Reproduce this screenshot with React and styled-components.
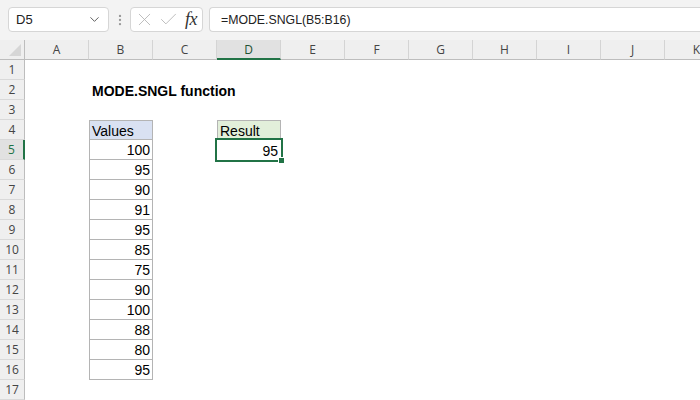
import React from "react";
import styled, { createGlobalStyle, css } from "styled-components";
import { ChevronDown, X, Check, EllipsisVertical } from "lucide-react";

const Global = createGlobalStyle`
  html, body { margin: 0; padding: 0; background: #fff; }
  body { width: 700px; height: 400px; overflow: hidden; font-family: "Liberation Sans", Arial, sans-serif; }
`;

const Page = styled.div`
  width: 700px;
  height: 400px;
  overflow: hidden;
  display: flex;
  flex-direction: column;
`;

const Toolbar = styled.div`
  height: 40px;
  flex: none;
  box-sizing: border-box;
  background: #f3f3f3;
  display: flex;
  align-items: flex-start;
  padding: 7px 0 0 8px;
`;

const NameBox = styled.div`
  width: 101px;
  height: 25px;
  box-sizing: border-box;
  background: #fff;
  border: 1px solid #d6d6d6;
  border-radius: 4px;
  display: flex;
  align-items: center;
  justify-content: space-between;
  padding: 0 6px 0 7px;
  font-size: 13px;
  color: #222;
`;

const Dots = styled.div`
  width: 21px;
  height: 25px;
  display: flex;
  align-items: center;
  justify-content: center;
  color: #9a9a9a;
`;

const FxBox = styled.div`
  width: 73px;
  height: 25px;
  box-sizing: border-box;
  background: #fff;
  border: 1px solid #d6d6d6;
  border-radius: 4px;
  display: flex;
  align-items: center;
  padding: 0 0 0 3px;
  gap: 3px;
  color: #b5b5b5;
  margin-right: 6px;
`;

const Fx = styled.span`
  font-family: "Liberation Serif", "Times New Roman", serif;
  font-style: italic;
  font-size: 18px;
  color: #333;
  margin-left: 3px;
  letter-spacing: -0.5px;
`;

const FormulaBar = styled.div`
  flex: 1;
  height: 25px;
  box-sizing: border-box;
  background: #fff;
  border: 1px solid #d6d6d6;
  border-right: none;
  border-radius: 4px 0 0 4px;
  display: flex;
  align-items: center;
  padding-left: 11px;
  font-size: 12.3px;
  color: #222;
`;

const Sheet = styled.div`
  display: grid;
  grid-template-columns: 25px repeat(11, 64px);
  grid-template-rows: 20px;
  grid-auto-rows: 20px;
  flex: 1;
  overflow: hidden;
`;

const ColHead = styled.div`
  box-sizing: border-box;
  background: ${(p) => (p.$active ? "#e1e1e1" : "#efefef")};
  border-right: 1px solid #d4d4d4;
  border-bottom: ${(p) => (p.$active ? "2px solid #217346" : "1px solid #bdbdbd")};
  display: flex;
  align-items: center;
  justify-content: center;
  font-family: "Open Sans", "Liberation Sans", sans-serif;
  font-size: 12px;
  color: ${(p) => (p.$active ? "#1f5133" : "#444")};
  padding-top: ${(p) => (p.$active ? "1px" : "0")};
`;

const Corner = styled.div`
  box-sizing: border-box;
  background: #efefef;
  border-right: 1px solid #bdbdbd;
  border-bottom: 1px solid #bdbdbd;
  position: relative;
  &::after {
    content: "";
    position: absolute;
    right: 3px;
    bottom: 3px;
    width: 0;
    height: 0;
    border-left: 12px solid transparent;
    border-bottom: 12px solid #d6d6d6;
  }
`;

const RowHead = styled.div`
  box-sizing: border-box;
  background: ${(p) => (p.$active ? "#e1e1e1" : "#efefef")};
  border-right: ${(p) => (p.$active ? "2px solid #217346" : "1px solid #bdbdbd")};
  border-bottom: 1px solid #d9d9d9;
  display: flex;
  align-items: center;
  justify-content: center;
  font-family: "Open Sans", "Liberation Sans", sans-serif;
  font-size: 12px;
  color: ${(p) => (p.$active ? "#217346" : "#444")};
`;

const Cell = styled.div`
  box-sizing: border-box;
  position: relative;
  font-size: 14px;
  color: #000;
  line-height: 20px;
  padding: 1px 3px 0 3px;
  white-space: nowrap;
  text-align: ${(p) => p.$align || "left"};
  font-weight: ${(p) => (p.$bold ? 700 : 400)};
  background: ${(p) => p.$fill || "transparent"};
  overflow: visible;
  ${(p) =>
    p.$boxed &&
    css`
      border-left: 1px solid #b4b4b4;
      border-right: 1px solid #b4b4b4;
      border-bottom: 1px solid #b4b4b4;
      line-height: 19px;
      padding-right: 2px;
      padding-left: 2px;
    `}
  ${(p) =>
    p.$top &&
    css`
      border-top: 1px solid #b4b4b4;
      line-height: 18px;
    `}
  ${(p) =>
    p.$selected &&
    css`
      &::before {
        content: "";
        position: absolute;
        left: -2px;
        top: -2px;
        right: -2px;
        bottom: -2px;
        border: 2px solid #217346;
        pointer-events: none;
      }
      &::after {
        content: "";
        position: absolute;
        right: -4px;
        bottom: -4px;
        background: #217346;
        border: 1px solid #fff;
        box-sizing: border-box;
        width: 7px;
        height: 7px;
      }
    `}
`;

const cols = ["A", "B", "C", "D", "E", "F", "G", "H", "I", "J", "K"];
const values = [100, 95, 90, 91, 95, 85, 75, 90, 100, 88, 80, 95];

function cellProps(row, col) {
  if (row === 2 && col === "B") return { text: "MODE.SNGL function", $bold: true };
  if (row === 4 && col === "B")
    return { text: "Values", $boxed: true, $top: true, $fill: "#d9e1f2" };
  if (row >= 5 && row <= 16 && col === "B")
    return { text: String(values[row - 5]), $boxed: true, $align: "right" };
  if (row === 4 && col === "D")
    return { text: "Result", $boxed: true, $top: true, $fill: "#e2efda" };
  if (row === 5 && col === "D") return { text: "95", $align: "right", $selected: true };
  return { text: "" };
}

export default function App() {
  const rows = Array.from({ length: 17 }, (_, i) => i + 1);
  return (
    <Page>
      <Global />
      <Toolbar>
        <NameBox>
          <span>D5</span>
          <ChevronDown size={15} strokeWidth={1.5} color="#555" />
        </NameBox>
        <Dots>
          <EllipsisVertical size={14} strokeWidth={2} />
        </Dots>
        <FxBox>
          <X size={21} strokeWidth={1} />
          <Check size={21} strokeWidth={1} />
          <Fx>fx</Fx>
        </FxBox>
        <FormulaBar>=MODE.SNGL(B5:B16)</FormulaBar>
      </Toolbar>
      <Sheet>
        <Corner />
        {cols.map((c) => (
          <ColHead key={c} $active={c === "D"}>
            {c}
          </ColHead>
        ))}
        {rows.map((r) => (
          <React.Fragment key={r}>
            <RowHead $active={r === 5}>{r}</RowHead>
            {cols.map((c) => {
              const { text, ...rest } = cellProps(r, c);
              return (
                <Cell key={c} {...rest}>
                  {text}
                </Cell>
              );
            })}
          </React.Fragment>
        ))}
      </Sheet>
    </Page>
  );
}
